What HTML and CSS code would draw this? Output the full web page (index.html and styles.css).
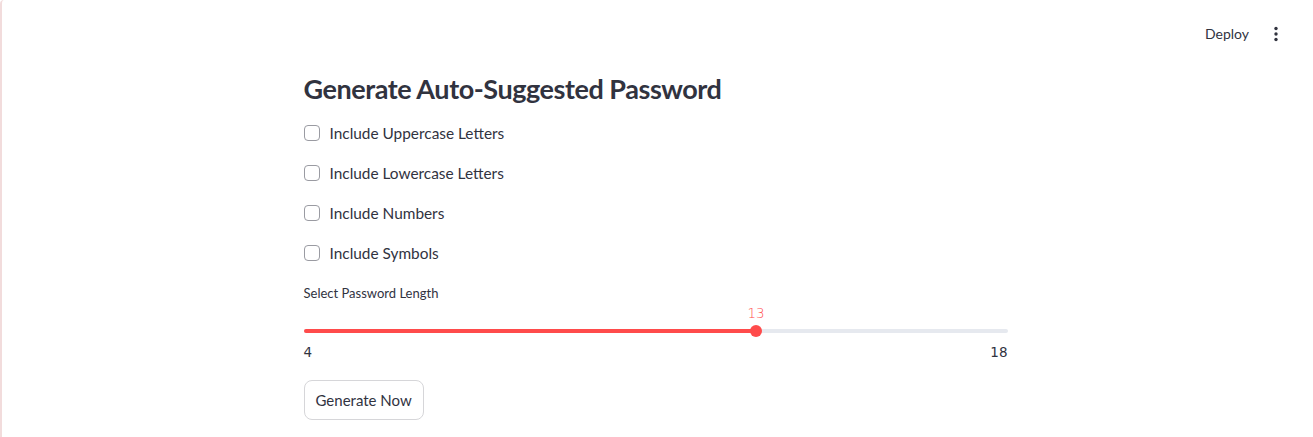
FILE: index.html
```html
<!DOCTYPE html>
<html lang="en">
<head>
<meta charset="utf-8">
<title>Generate Auto-Suggested Password</title>
<link rel="stylesheet" href="styles.css">
</head>
<body>
<div class="app">
  <header class="header">
    <span class="deploy">Deploy</span>
    <span class="kebab" aria-label="Main menu">
      <svg width="16" height="16" viewBox="0 0 16 16"><circle cx="8" cy="2.5" r="1.7" fill="#31333f"/><circle cx="8" cy="8" r="1.7" fill="#31333f"/><circle cx="8" cy="13.5" r="1.7" fill="#31333f"/></svg>
    </span>
  </header>
  <main class="main">
    <div class="block">
      <h3 class="title">Generate Auto-Suggested Password</h3>
      <label class="check"><span class="box"></span><span class="check-label">Include Uppercase Letters</span></label>
      <label class="check"><span class="box"></span><span class="check-label">Include Lowercase Letters</span></label>
      <label class="check"><span class="box"></span><span class="check-label">Include Numbers</span></label>
      <label class="check"><span class="box"></span><span class="check-label">Include Symbols</span></label>
      <div class="slider">
        <div class="slider-label">Select Password Length</div>
        <div class="slider-body">
          <div class="track">
            <div class="fill" style="width:64.2857%"></div>
            <div class="thumb" style="left:64.2857%"><span class="thumb-value">13</span></div>
          </div>
        </div>
        <div class="ticks"><span>4</span><span>18</span></div>
      </div>
      <button class="btn">Generate Now</button>
    </div>
  </main>
</div>
</body>
</html>
```

FILE: styles.css
```css
* { box-sizing: border-box; }
html, body { margin: 0; padding: 0; background: #fff; }
body {
  font-family: "Lato", "Noto Sans", sans-serif;
  color: #31333f;
  width: 1313px;
  height: 437px;
  overflow: hidden;
}
.app {
  height: 437px;
  border-left: 2px solid #f2dcdc;
  border-top-left-radius: 4px;
  display: flex;
  flex-direction: column;
}
.header {
  height: 60px;
  display: flex;
  align-items: center;
  justify-content: flex-end;
  padding-right: 29px;
  gap: 19px;
}
.deploy {
  font-size: 14px;
  color: #31333f;
  margin-top: 7px;
}
.kebab { display: flex; margin-top: 7px; }
.main {
  display: flex;
  justify-content: center;
  padding-right: 4px;
}
.block {
  width: 704px;
  display: flex;
  flex-direction: column;
  align-items: flex-start;
}
.title {
  margin: 12px 0 0 0;
  font-size: 27px;
  font-weight: 700;
  line-height: 34px;
  letter-spacing: -0.45px;
}
.check {
  display: flex;
  align-items: center;
  height: 24px;
  margin-top: 16px;
  font-size: 15.4px;
}
.title + .check { margin-top: 15px; }
.box {
  width: 16px;
  height: 16px;
  border: 1px solid #9a9ba2;
  border-radius: 4px;
  margin-right: 10px;
  background: #fff;
}
.slider {
  width: 704px;
  margin-top: 17px;
}
.slider-label {
  font-size: 13px;
  line-height: 22px;
}
.slider-body {
  height: 35px;
  display: flex;
  align-items: flex-end;
  padding-bottom: 6px;
}
.track {
  position: relative;
  width: 100%;
  height: 4px;
  border-radius: 2px;
  background: #e6e9ef;
}
.fill {
  height: 4px;
  border-radius: 2px;
  background: #ff4b4b;
}
.thumb {
  position: absolute;
  top: 50%;
  width: 12px;
  height: 12px;
  margin-left: -6px;
  margin-top: -6px;
  border-radius: 50%;
  background: #ff4b4b;
}
.thumb-value {
  position: absolute;
  left: 50%;
  bottom: 16px;
  transform: translateX(-50%);
  font-size: 13.5px;
  color: #ff4b4b;
  font-family: "DejaVu Sans", sans-serif;
  font-weight: 300;
}
.ticks {
  display: flex;
  justify-content: space-between;
  font-size: 13.5px;
  line-height: 20px;
  margin-top: 3px;
  font-family: "DejaVu Sans", sans-serif;
}
.btn {
  margin-top: 18px;
  height: 40px;
  padding: 0 11px;
  border: 1px solid #d6d6d9;
  border-radius: 8px;
  background: #fff;
  color: #31333f;
  font-family: "Lato", "Noto Sans", sans-serif;
  font-size: 15px;
}
```
